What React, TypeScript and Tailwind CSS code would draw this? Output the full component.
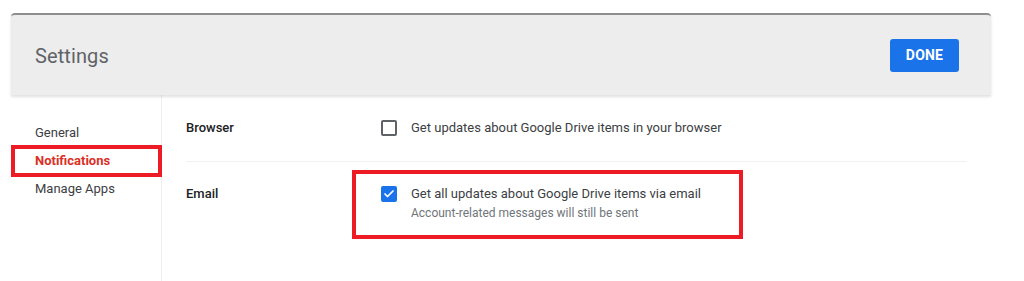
import {Check} from "lucide-react";

interface NavItemProps {
    label: string;
    active?: boolean;
}

const NavItem: React.FC<NavItemProps> = ({label, active}) => {
    return (
        <div className="relative h-7 flex items-center pl-6">
            <span className={active ? "text-[#d93025] font-bold text-[13px]" : "text-[#3c4043] text-[13px]"}>
                {label}
            </span>
            {active && (
                <span className="absolute -top-[2px] -bottom-[2px] left-0 -right-[1px] border-4 border-[#ed1c24]"></span>
            )}
        </div>
    )
}

interface CheckboxProps {
    checked?: boolean;
}

const Checkbox: React.FC<CheckboxProps> = ({checked}) => {
    return checked ? (
        <span className="w-4 h-4 rounded-[2px] bg-[#1a73e8] flex items-center justify-center shrink-0">
            <Check size={12} strokeWidth={3.5} color="#ffffff"/>
        </span>
    ) : (
        <span className="w-4 h-4 rounded-[2px] border-2 border-[#5f6368] shrink-0"></span>
    )
}

export default function App() {
    return (
        <div className="w-[1024px] h-[281px] bg-white pt-[13px] pl-[11px] font-['Roboto',sans-serif] overflow-hidden">
            <div className="w-[980px]">
                <header className="relative z-10 h-[82px] bg-[#ededed] border-t-2 border-[#8e8e8e] rounded-t-[4px] flex items-center justify-between pl-6 pr-8 shadow-[0_2px_3px_rgba(0,0,0,0.12)]">
                    <h1 className="text-[20px] text-[#5f6368] tracking-[0.1px] pt-[2px]">Settings</h1>
                    <button className="w-[69px] h-[33px] rounded-[3px] bg-[#1a73e8] text-white text-[14px] font-bold tracking-[0.2px]">
                        DONE
                    </button>
                </header>
                <div className="flex">
                    <nav className="w-[151px] h-[186px] border-r border-[#eeeeee] pt-6">
                        <NavItem label="General"/>
                        <NavItem label="Notifications" active/>
                        <NavItem label="Manage Apps"/>
                    </nav>
                    <main className="flex-1 px-6">
                        <div className="h-[67px] flex items-center border-b border-[#f1f1f1]">
                            <div className="w-[195px] text-[13px] font-medium text-[#202124]">Browser</div>
                            <Checkbox/>
                            <span className="ml-[14px] text-[13px] text-[#3c4043]">Get updates about Google Drive items in your browser</span>
                        </div>
                        <div className="relative flex pt-[22px]">
                            <div className="w-[195px] h-5 flex items-center text-[13px] font-medium text-[#202124]">Email</div>
                            <div className="h-5 flex items-center">
                                <Checkbox checked/>
                            </div>
                            <div className="ml-[14px]">
                                <div className="h-5 flex items-center text-[13px] text-[#3c4043]">Get all updates about Google Drive items via email</div>
                                <div className="h-[18px] flex items-center text-[12px] text-[#70757a]">Account-related messages will still be sent</div>
                            </div>
                            <span className="absolute left-[166px] top-2 w-[391px] h-[69px] border-4 border-[#ed1c24]"></span>
                        </div>
                    </main>
                </div>
            </div>
        </div>
    )
}
